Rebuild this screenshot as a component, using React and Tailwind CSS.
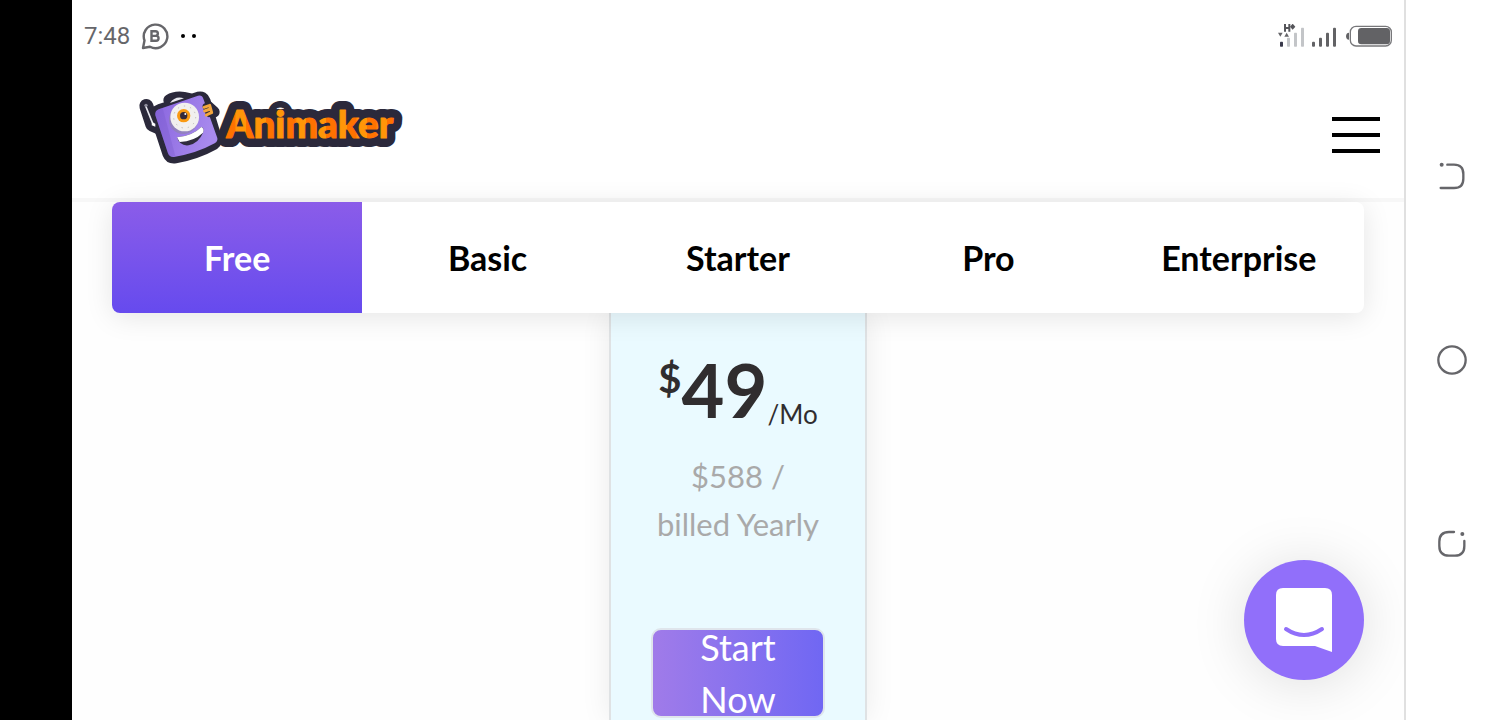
import React from "react";

const plans = ["Free", "Basic", "Starter", "Pro", "Enterprise"];

function StatusBar() {
  return (
    <div className="flex h-18 items-center justify-between bg-white px-3">
      <div className="flex items-center gap-[11px] text-[#66666a]">
        <span className="font-[Roboto,sans-serif] text-2xl">7:48</span>
        <svg className="size-7" viewBox="0 0 28 28" fill="none" stroke="currentColor" strokeWidth="2.4">
          <path d="M2 26L3.500 18.500A11.800 11.800 0 1 1 9 24.800z" strokeLinejoin="round" />
          <path d="M10.500 9.200h4a2.300 2.300 0 0 1 0 4.700h-4zM10.500 13.900h4.600a2.400 2.400 0 0 1 0 4.900h-4.600z" />
        </svg>
        <svg className="h-1 w-4" viewBox="0 0 16 4" fill="#000">
          <circle cx="3" cy="2" r="2" />
          <circle cx="14" cy="2" r="2" />
        </svg>
      </div>
      <svg className="h-6 w-[114px]" viewBox="54 40 342 72" aria-label="Signal and battery">
        <g fill="none" stroke="#55555a" strokeWidth="6">
          <path d="M75 40v23M88 40v23M75 52h13" />
        </g>
        <path d="M98 39l8 9-8 9-8-9z" fill="#55555a" />
        <path d="M54 66h14l-7 12zM73 78h14l-7-12z" fill="#66666a" />
        <rect x="60" y="93" width="9" height="15" rx="2" fill="#38384a" />
        <g fill="#c3c5c8">
          <rect x="81" y="81" width="9" height="27" rx="2" />
          <rect x="102" y="66" width="9" height="42" rx="2" />
          <rect x="123" y="51" width="9" height="57" rx="2" />
        </g>
        <g fill="#626265">
          <rect x="156" y="93" width="9" height="15" rx="3" />
          <rect x="177" y="81" width="9" height="27" rx="3" />
          <rect x="198" y="66" width="9" height="42" rx="3" />
          <rect x="219" y="51" width="9" height="57" rx="3" />
          <path d="M267 66c-12 0-12 21 0 21z" />
          <rect x="294" y="52" width="96" height="49" rx="10" />
        </g>
        <rect x="271" y="47" width="123" height="59" rx="17" fill="none" stroke="#77777a" strokeWidth="4" />
      </svg>
    </div>
  );
}

function Logo() {
  return (
    <svg className="h-[95px] w-[280px]" viewBox="0 0 840 285" role="img" aria-label="Animaker">
      {/* dark outline */}
      <g fill="#2b293b" stroke="#2b293b" strokeLinejoin="round" strokeLinecap="round">
        <path d="M90 92L206 55Q218 52 222 64L256 176Q258 184 250 190Q200 218 136 230Q122 232 117 220L80 108Q77 96 90 92z" strokeWidth="40" />
        <path d="M49 78L67 134L86 142" strokeWidth="42" fill="none" />
        <path d="M117 60Q140 46 178 56M232 78L252 96" strokeWidth="34" fill="none" />
        <path d="M256 172L300 172" strokeWidth="34" />
      </g>
      <text
        x="289"
        y="174"
        className="font-[Lato,sans-serif] text-[116px] font-black"
        fill="#2b293b"
        stroke="#2b293b"
        strokeWidth="54"
        strokeLinejoin="round"
      >
        Animaker
      </text>
      <text
        x="289"
        y="174"
        aria-hidden="true"
        className="font-[Lato,sans-serif] text-[116px] font-black"
        fill="url(#logoOrange)"
        stroke="url(#logoOrange)"
        strokeWidth="3"
        strokeLinejoin="round"
      >
        Animaker
      </text>
      {/* robot */}
      <path d="M47 78L68 130" stroke="#e6e6ee" strokeWidth="5" strokeLinecap="round" />
      <circle cx="48" cy="76" r="5" fill="#8d8c9c" />
      <path d="M66 126l10 5v9l-11-4z" fill="#fff" />
      <path d="M120 69Q136 46 162 55z" fill="#e9e9ef" />
      <path d="M86 88L204 47Q216 44 220 56L262 174Q264 184 254 190Q200 220 132 231Q118 232 114 220L76 106Q74 93 86 88z" fill="url(#logoPurple)" />
      <path d="M86 88L98 84L136 228Q118 234 114 220L76 106Q74 93 86 88z" fill="#7556c8" opacity="0.3" />
      <circle cx="160" cy="119" r="43" fill="#8c8997" opacity="0.5" />
      <circle cx="164" cy="111" r="43" fill="#f1f0ee" />
      <circle cx="164" cy="111" r="33" fill="none" stroke="#bdbbb9" strokeWidth="3" strokeDasharray="4 15" />
      <circle cx="161" cy="107" r="20" fill="#f99a12" />
      <circle cx="161" cy="107" r="11" fill="#33293a" />
      <circle cx="166" cy="102" r="3" fill="#fff" />
      <path d="M141 172Q187 168 214 141Q224 144 219 158Q207 188 176 196Q149 199 141 172z" fill="#302c3e" />
      <path d="M141 172Q187 168 214 141Q224 146 219 158Q192 184 149 186z" fill="#fff" />
      <path d="M229 80L238 100" stroke="#2b293b" strokeWidth="22" strokeLinecap="round" />
      <g fill="none" stroke="#f4a63c" strokeWidth="9" strokeLinecap="round">
        <path d="M222 82l15-5M224 93l17-6M229 105l15-7M239 76l6 22" />
      </g>
      <defs>
        <linearGradient id="logoPurple" x1="0" y1="0" x2="1" y2="0.3">
          <stop offset="0" stopColor="#8965de" />
          <stop offset="1" stopColor="#a88aee" />
        </linearGradient>
        <linearGradient id="logoOrange" x1="0" y1="0" x2="0.12" y2="0" spreadMethod="repeat">
          <stop offset="0.45" stopColor="#ff7200" />
          <stop offset="0.55" stopColor="#ff9608" />
        </linearGradient>
      </defs>
    </svg>
  );
}

function Header() {
  return (
    <header className="flex h-[130px] items-start justify-between border-b-4 border-[#f7f7f7] bg-white pt-2 pr-6 pl-[58px]">
      <a href="#home">
        <Logo />
      </a>
      <button type="button" aria-label="Menu" className="mt-[37px] flex w-12 flex-col gap-3">
        <span className="h-1 w-full bg-black" />
        <span className="h-1 w-full bg-black" />
        <span className="h-1 w-full bg-black" />
      </button>
    </header>
  );
}

function PlanTabs() {
  return (
    <nav className="relative z-10 mx-10 grid h-[111px] grid-cols-5 overflow-hidden rounded-lg bg-white shadow-[0_4px_28px_rgba(0,0,0,0.1)]">
      {plans.map((plan, i) => (
        <button
          key={plan}
          type="button"
          className={
            "text-[34px] font-bold " +
            (i === 0 ? "bg-linear-to-b from-[#8b5ce9] to-[#664aee] text-white" : "text-black")
          }
        >
          {plan}
        </button>
      ))}
    </nav>
  );
}

function PriceCard() {
  return (
    <section className="mx-auto flex w-[258px] flex-1 flex-col items-center border-x-2 border-[#dfe2e4] bg-[#eafaff] px-10 pt-[39px] shadow-[0_0_28px_rgba(0,0,0,0.08)]">
      <div className="flex h-[82px] items-start text-[#302d2f]">
        <span className="text-[40px] leading-[52px] font-bold">$</span>
        <span className="text-[74px] leading-[76px] font-bold">49</span>
        <span className="self-end text-[26px] leading-10">/Mo</span>
      </div>
      <p className="mt-[18px] text-center text-[31px] leading-12 text-[#a9a9a9]">
        $588 /<br />
        <span className="whitespace-nowrap">billed Yearly</span>
      </p>
      <button
        type="button"
        className="mt-20 flex h-[90px] w-full shrink-0 items-center justify-center rounded-[10px] border-2 border-[#dfe5ec] bg-linear-to-r from-[#a07be9] to-[#7067f3] px-10 text-4xl leading-[52px] text-white"
      >
        Start Now
      </button>
    </section>
  );
}

function ChatButton() {
  return (
    <button
      type="button"
      aria-label="Open chat"
      className="absolute right-10 bottom-10 z-20 flex size-30 items-center justify-center rounded-full bg-[#916ffa] shadow-[0_4px_56px_rgba(0,0,0,0.13)]"
    >
      <svg className="h-16 w-14" viewBox="0 0 56 64">
        <path d="M7 0H49Q56 0 56 7V64L39 58H7Q0 58 0 51V7Q0 0 7 0z" fill="#fff" />
        <path d="M10 41Q28 53 46 41" fill="none" stroke="#916ffa" strokeWidth="4" strokeLinecap="round" />
      </svg>
    </button>
  );
}

function PhoneNav() {
  return (
    <aside className="flex w-24 shrink-0 flex-col items-center justify-center gap-[154px] border-l-2 border-[#e0e0e0] bg-white pr-0.5 text-[#66666a]">
      <button type="button" aria-label="Back">
        <svg className="size-[30px]" viewBox="111 34 90 90" fill="none" stroke="currentColor" strokeWidth="7" strokeLinecap="round">
          <path d="M142 45h20q28 0 28 28v14q0 28-28 28h-40" />
          <circle cx="125" cy="45" r="6" fill="currentColor" stroke="none" />
        </svg>
      </button>
      <button type="button" aria-label="Home">
        <svg className="size-[30px]" viewBox="111 45 90 90" fill="none" stroke="currentColor" strokeWidth="7">
          <circle cx="156" cy="90" r="41" />
        </svg>
      </button>
      <button type="button" aria-label="Recent apps">
        <svg className="size-[30px]" viewBox="111 42 90 90" fill="none" stroke="currentColor" strokeWidth="7" strokeLinecap="round">
          <path d="M162 51h-15q-29 0-29 29v13q0 29 29 29h18q28 0 28-29v-15" />
          <circle cx="187" cy="57" r="6" fill="currentColor" stroke="none" />
        </svg>
      </button>
    </aside>
  );
}

export default function App() {
  return (
    <div className="flex h-screen overflow-hidden bg-black font-[Lato,sans-serif]">
      <main className="relative ml-18 flex flex-1 flex-col overflow-hidden bg-[#fefefe]">
        <StatusBar />
        <Header />
        <PlanTabs />
        <PriceCard />
        <ChatButton />
      </main>
      <PhoneNav />
    </div>
  );
}
